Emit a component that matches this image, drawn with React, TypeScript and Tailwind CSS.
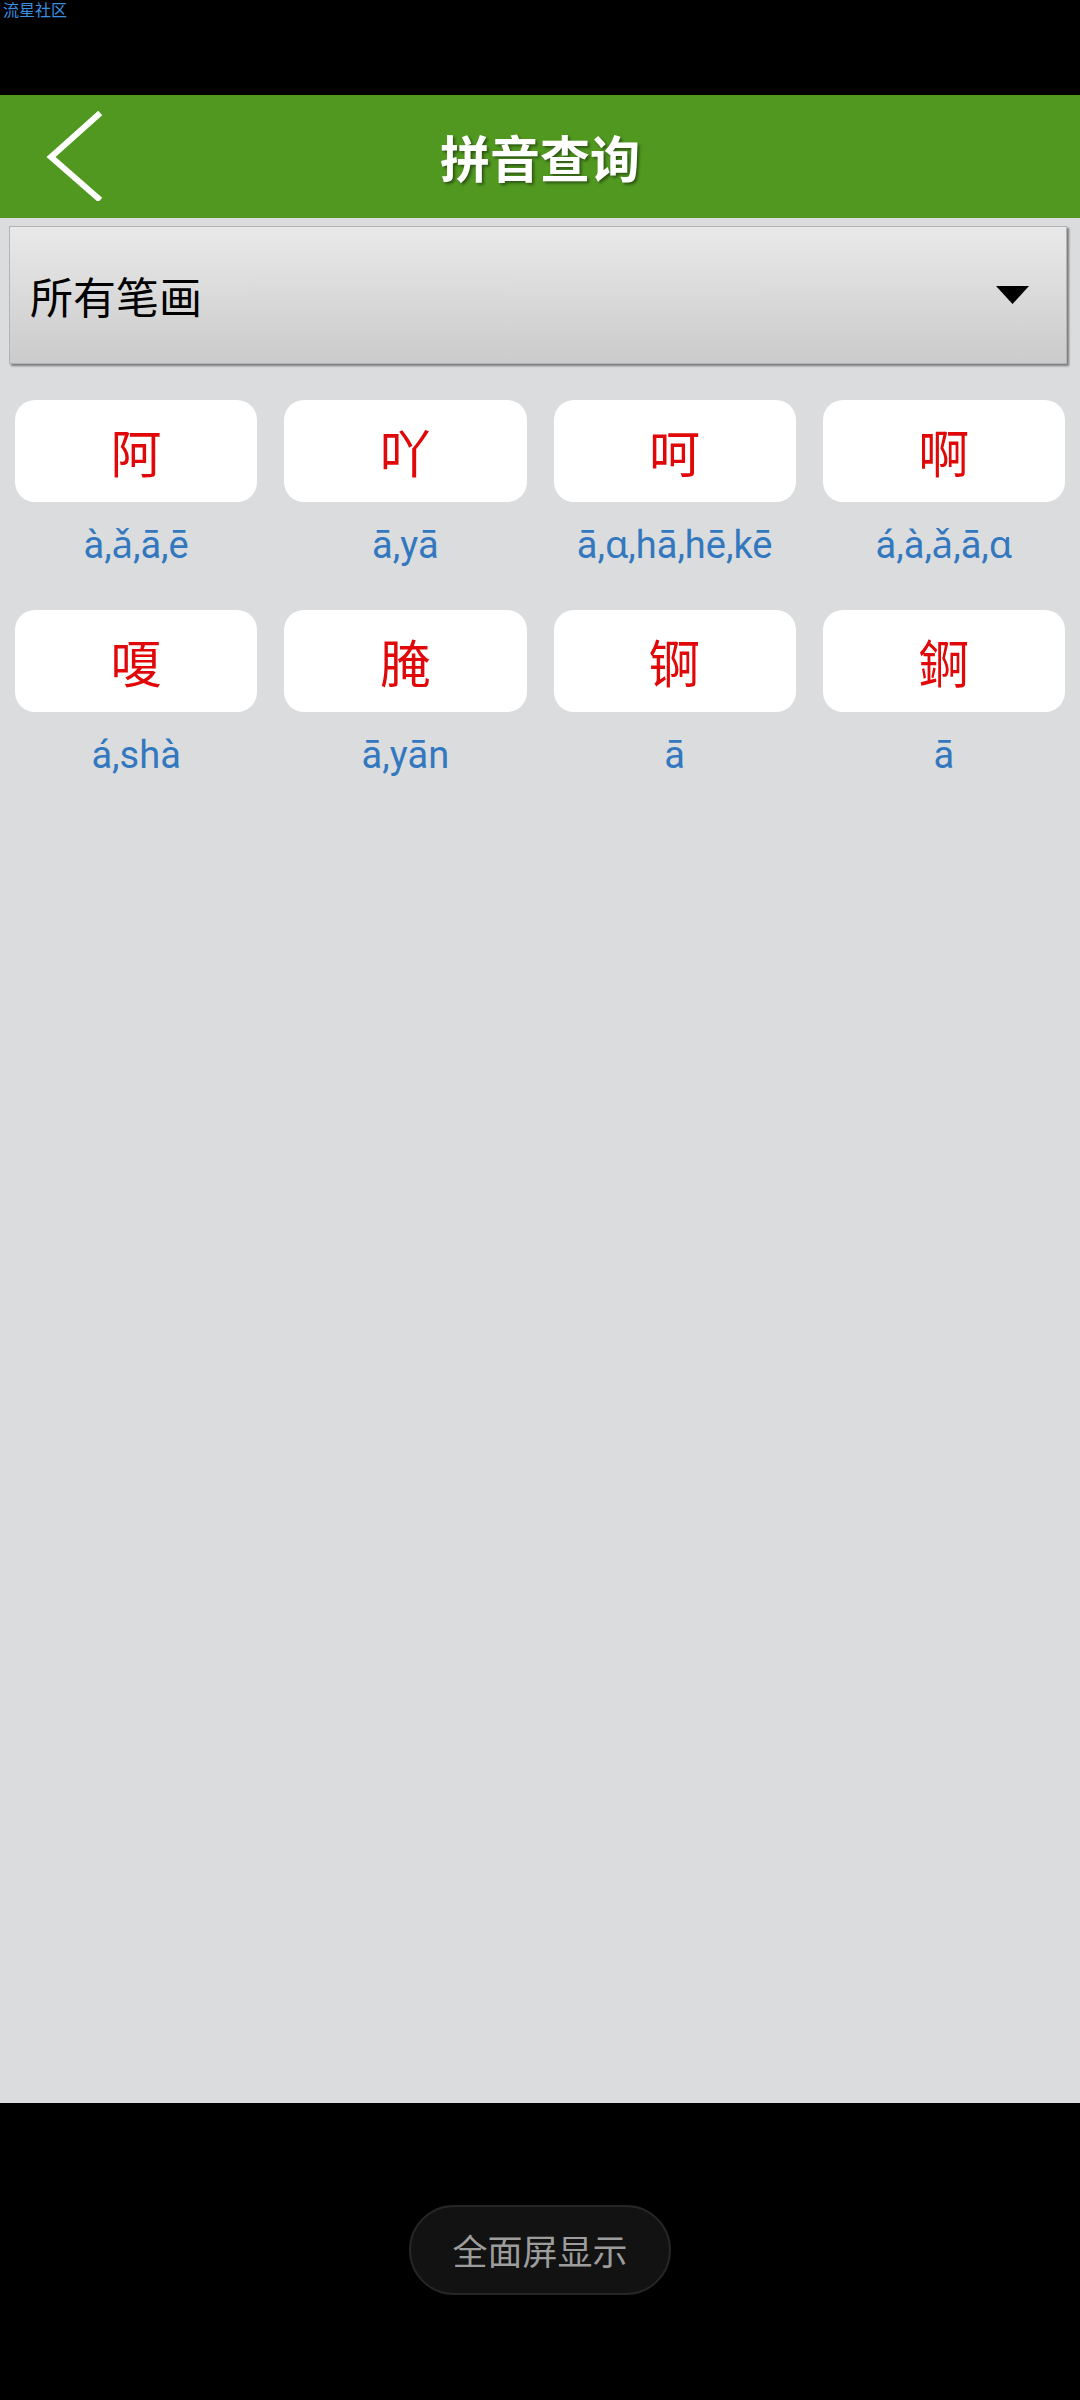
import React from 'react';

const cjk = '"Noto Sans CJK SC", "Noto Sans", sans-serif';

const chars = [
  { zi: '阿', py: 'à,ǎ,ā,ē' },
  { zi: '吖', py: 'ā,yā' },
  { zi: '呵', py: 'ā,ɑ,hā,hē,kē' },
  { zi: '啊', py: 'á,à,ǎ,ā,ɑ' },
  { zi: '嗄', py: 'á,shà' },
  { zi: '腌', py: 'ā,yān' },
  { zi: '锕', py: 'ā' },
  { zi: '錒', py: 'ā' },
];

export default function App() {
  return (
    <div
      className="w-[1080px] h-[2400px] flex flex-col bg-black"
      style={{ fontFamily: cjk }}
    >
      {/* Status bar */}
      <div className="h-[95px] shrink-0 bg-black">
        <div className="pl-[3px] pt-[1px] text-[16px] leading-[16px] text-[#3b8fe0]">
          流星社区
        </div>
      </div>

      {/* Header */}
      <div className="relative h-[123px] shrink-0 bg-[#519821] flex items-center justify-center">
        <button className="absolute left-[44px] top-[16px]" aria-label="返回">
          <svg width="60" height="90" viewBox="0 0 60 90">
            <polyline
              points="54,4 7,46 54,87"
              fill="none"
              stroke="#ffffff"
              strokeWidth="6"
              strokeLinecap="square"
            />
          </svg>
        </button>
        <h1 className="text-[50px] font-bold text-white [text-shadow:2px_2px_3px_rgba(0,0,0,0.45)]">
          拼音查询
        </h1>
      </div>

      {/* Content */}
      <div className="flex-1 bg-[#dadcde] pt-[8px]">
        {/* Stroke filter dropdown */}
        <div className="ml-[9px] w-[1058px] h-[138px] flex items-center justify-between pl-[20px] pr-[37px] bg-linear-to-b from-[#e9e9e9] to-[#cbcbcb] border border-[#b4b4b4] shadow-[2px_2px_2px_rgba(0,0,0,0.45)]">
          <span className="text-[43px] text-black">所有笔画</span>
          <svg width="33" height="18" viewBox="0 0 33 18">
            <polygon points="0,0 33,0 16.5,18" fill="#000000" />
          </svg>
        </div>

        {/* Character grid */}
        <div className="mt-[36px] px-[15px] grid grid-cols-4 gap-x-[27px] gap-y-[41px]">
          {chars.map((c) => (
            <div key={c.zi} className="flex flex-col items-center">
              <div className="w-full h-[102px] rounded-[20px] bg-white flex items-center justify-center">
                <span className="text-[51px] leading-none text-[#e00808]">
                  {c.zi}
                </span>
              </div>
              <div
                className="mt-[19px] text-[38px] leading-[48px] text-[#3378be]"
                style={{ fontFamily: 'Roboto, "Noto Sans", sans-serif' }}
              >
                {c.py}
              </div>
            </div>
          ))}
        </div>
      </div>

      {/* Bottom nav area */}
      <div className="h-[297px] shrink-0 bg-black flex justify-center pt-[102px]">
        <div className="w-[262px] h-[90px] rounded-full bg-[#121212] border-2 border-[#262626] flex items-center justify-center">
          <span className="text-[35px] text-[#9c9c9c]">全面屏显示</span>
        </div>
      </div>
    </div>
  );
}
